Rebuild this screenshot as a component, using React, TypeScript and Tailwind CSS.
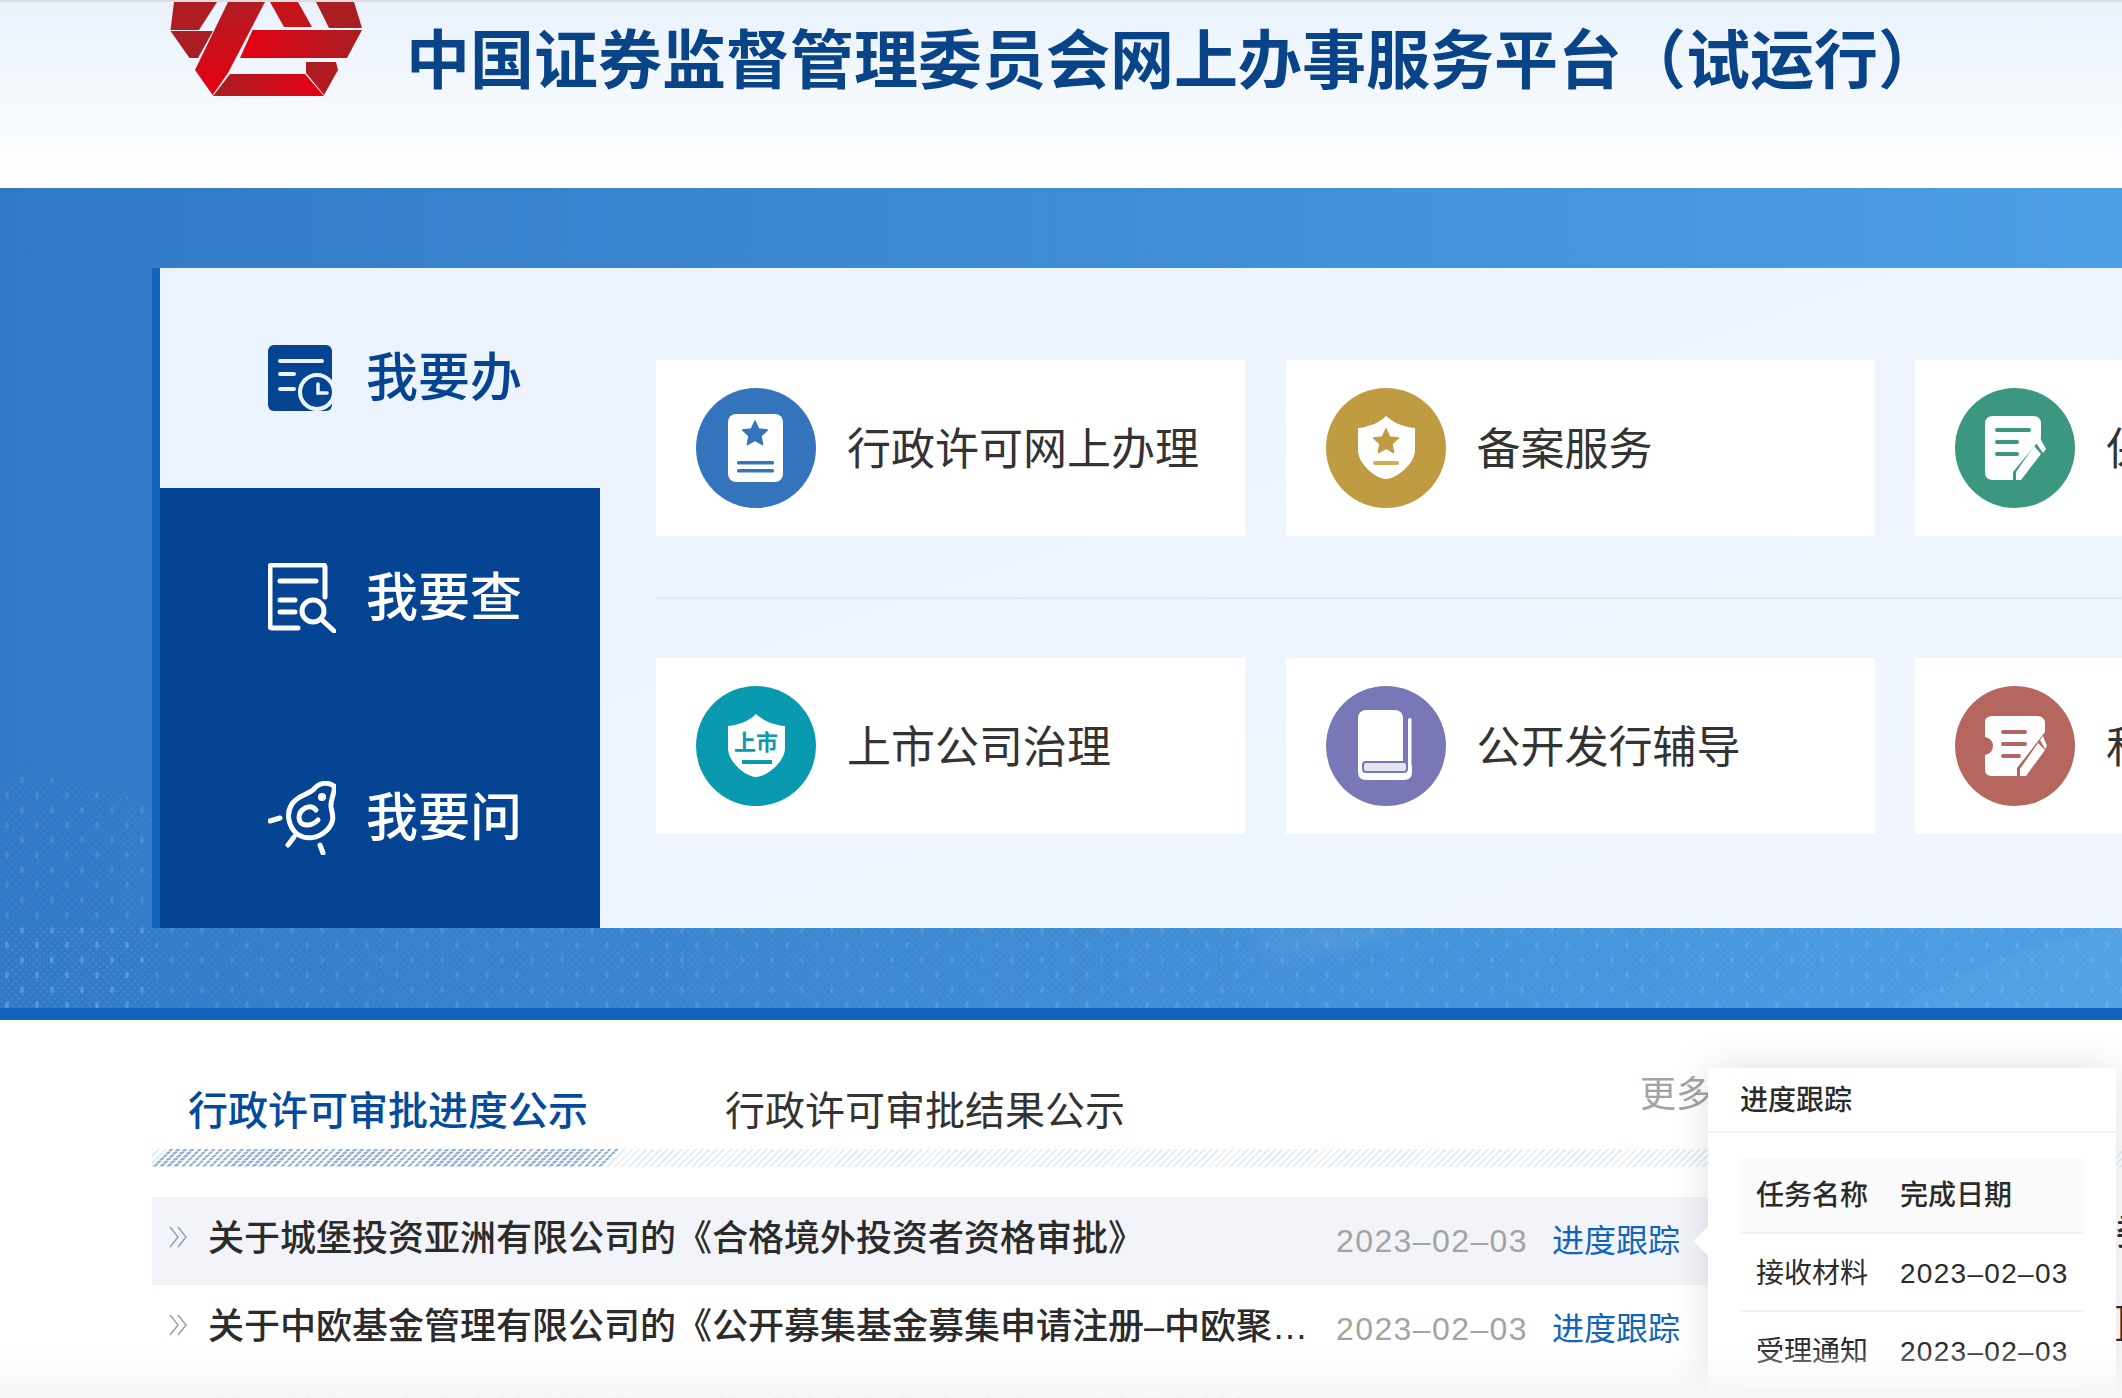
import React from "react";

const cjk = "font-['Liberation_Sans','Noto_Sans_CJK_SC',sans-serif]";

function Star({ cx, cy, r, fill }: { cx: number; cy: number; r: number; fill: string }) {
  const pts = Array.from({ length: 10 }, (_, i) => {
    const a = (Math.PI / 5) * i - Math.PI / 2;
    const d = i % 2 === 0 ? r : r * 0.48;
    return `${cx + d * Math.cos(a)},${cy + d * Math.sin(a)}`;
  }).join(" ");
  return <polygon points={pts} fill={fill} stroke={fill} strokeWidth="1.5" strokeLinejoin="round" />;
}

function Logo() {
  return (
    <svg className="absolute left-0 top-0" width="400" height="100" viewBox="0 0 400 100">
      <defs>
        <linearGradient id="lg1" x1="0" x2="1" y1="0" y2="0">
          <stop offset="0" stopColor="#e60012" />
          <stop offset="1" stopColor="#a81e22" />
        </linearGradient>
        <linearGradient id="lg2" x1="0" x2="1" y1="0" y2="0">
          <stop offset="0" stopColor="#a81e22" />
          <stop offset="1" stopColor="#e60012" />
        </linearGradient>
        <linearGradient id="lg3" x1="0" x2="0" y1="0" y2="1">
          <stop offset="0" stopColor="#b01c22" />
          <stop offset="1" stopColor="#e60012" />
        </linearGradient>
      </defs>
      <polygon points="174,2 170.5,30 199,30 217,2" fill="#b01c22" />
      <polygon points="170.5,31 189.5,58 198,58 213,31" fill="#a81e22" />
      <polygon points="228,2 265,2 228,73 212.6,95 195,70" fill="url(#lg3)" />
      <polygon points="230,74 305,74 324,96 213,96" fill="url(#lg2)" />
      <polygon points="252.6,30 362,30 347,58 240,58" fill="url(#lg1)" />
      <polygon points="270,2 298,2 312,27 284,27" fill="#c4151c" />
      <polygon points="316,2 354,2 362,28 329,28" fill="#a81e22" />
      <polygon points="306,62 336,62 338,70 324,95 306,73" fill="#ae1c22" />
    </svg>
  );
}

function NavTodo() {
  return (
    <svg width="68" height="66" viewBox="0 0 68 66">
      <rect x="0" y="0" width="64" height="66" rx="6" fill="#044493" />
      <g stroke="#ebf3fd" strokeWidth="4" strokeLinecap="round">
        <path d="M12 16H54M12 29H26M12 44H26" />
      </g>
      <circle cx="49" cy="47" r="17" fill="#044493" stroke="#ebf3fd" strokeWidth="4" />
      <path d="M50 39V48H59" fill="none" stroke="#ebf3fd" strokeWidth="3.5" strokeLinecap="round" />
    </svg>
  );
}

function NavSearch() {
  return (
    <svg width="68" height="70" viewBox="0 0 68 70" fill="none" stroke="#fff" strokeWidth="5" strokeLinecap="round">
      <path d="M30 65H4Q2 65 2 63V4Q2 2 4 2H55Q57 2 57 4V34" />
      <path d="M12 18H48M12 37H27M12 49H27" />
      <circle cx="45" cy="48" r="11" />
      <path d="M53 56L66 68" />
    </svg>
  );
}

function NavAsk() {
  return (
    <svg width="68" height="74" viewBox="0 0 68 74" fill="none" stroke="#fff" strokeWidth="5" strokeLinecap="round">
      <path d="M2 40L12 37M20 64L26 56M52 64L55 72" />
      <path d="M66 5C60 1 52 1 46 8C40 14 30 14 24 23C18 32 20 45 29 53C38 59 50 58 59 49C67 41 65 34 63 26C62 18 68 10 66 5Z" />
      <path d="M48 29C42 22 31 28 31 37C32 46 43 46 50 39" />
      <circle cx="54" cy="16" r="1.6" fill="#fff" />
    </svg>
  );
}

const shieldPath = "M60 28C54 34 44 39 32 40V62C32 76 50 91 60 91C70 91 89 76 89 62V40C76 39 67 34 60 28Z";

function CardIcon({ kind }: { kind: string }) {
  if (kind === "permit") {
    return (
      <svg width="120" height="120" viewBox="0 0 120 120">
        <circle cx="60" cy="60" r="60" fill="#3474bd" />
        <rect x="32" y="26" width="55" height="68" rx="8" fill="#fff" />
        <Star cx={59} cy={46} r={13} fill="#3474bd" />
        <rect x="41" y="73" width="37" height="3.5" rx="1.5" fill="#3474bd" />
        <rect x="41" y="81" width="37" height="3.5" rx="1.5" fill="#3474bd" />
      </svg>
    );
  }
  if (kind === "record") {
    return (
      <svg width="120" height="120" viewBox="0 0 120 120">
        <circle cx="60" cy="60" r="60" fill="#bf9c42" />
        <path d={shieldPath} fill="#fff" />
        <Star cx={60} cy={54} r={13} fill="#bf9c42" />
        <rect x="47" y="73" width="26" height="4" rx="2" fill="#d0ad52" />
      </svg>
    );
  }
  if (kind === "listed") {
    return (
      <svg width="120" height="120" viewBox="0 0 120 120">
        <circle cx="60" cy="60" r="60" fill="#0a9ab0" />
        <path d={shieldPath} fill="#fff" />
        <text x="60" y="64" textAnchor="middle" fontSize="22" fontWeight="700" fill="#0a9ab0" fontFamily="'Noto Sans CJK SC',sans-serif">上市</text>
        <rect x="46" y="74" width="30" height="4" fill="#0a9ab0" />
      </svg>
    );
  }
  if (kind === "book") {
    return (
      <svg width="120" height="120" viewBox="0 0 120 120">
        <circle cx="60" cy="60" r="60" fill="#7a77b6" />
        <rect x="32" y="24" width="45" height="68" rx="8" fill="#fff" />
        <path d="M32 80H86V86Q86 94 78 94H40Q32 94 32 86Z" fill="#fff" />
        <rect x="82" y="32" width="3.5" height="54" rx="1.5" fill="#fff" />
        <rect x="37" y="76" width="44" height="10" rx="3" fill="#e6e5f3" stroke="#7a77b6" strokeWidth="2" />
      </svg>
    );
  }
  if (kind === "pen") {
    return (
      <svg width="120" height="120" viewBox="0 0 120 120">
        <circle cx="60" cy="60" r="60" fill="#3b977f" />
        <path d="M38 28H78Q86 28 86 36V50L58 84V92H38Q30 92 30 84V36Q30 28 38 28Z" fill="#fff" />
        <path d="M61 92H66L86 66L79 58L61 84Z" fill="#fff" />
        <path d="M81 55L85 50L91 61L88 65Z" fill="#fff" />
        <path d="M42 42H74M42 54H62M42 66H62" stroke="#3b977f" strokeWidth="4" strokeLinecap="round" />
      </svg>
    );
  }
  return (
    <svg width="120" height="120" viewBox="0 0 120 120">
      <circle cx="60" cy="60" r="60" fill="#b5665f" />
      <path d="M38 30H82Q90 30 90 38V46L62 82V90H38Q30 90 30 84V69Q38 67 38 60Q38 53 30 51V36Q30 30 38 30Z" fill="#fff" />
      <path d="M65 90H71L90 64L83 57L65 83Z" fill="#fff" />
      <path d="M85 54L88 50L92 60L90 63Z" fill="#fff" />
      <path d="M48 46H70M48 58H70M48 70H64" stroke="#b5665f" strokeWidth="4" strokeLinecap="round" />
    </svg>
  );
}

function ServiceCard({ kind, label }: { kind: string; label: string }) {
  return (
    <div className="w-[589px] h-[176px] bg-white flex items-center pl-[40px] gap-[31px] shrink-0">
      <CardIcon kind={kind} />
      <span className="text-[44px] leading-none text-[#333] whitespace-nowrap mt-[3px]">{label}</span>
    </div>
  );
}

function BandDots() {
  return (
    <svg className="absolute left-0 top-0" width="2122" height="820" viewBox="0 0 2122 820">
      <defs>
        <pattern id="dots" width="30" height="30" patternUnits="userSpaceOnUse">
          <ellipse cx="7" cy="7" rx="1.8" ry="3.5" fill="#fff" fillOpacity="0.1" />
          <ellipse cx="22" cy="22" rx="1.8" ry="3.5" fill="#fff" fillOpacity="0.1" />
        </pattern>
        <pattern id="fine" width="7" height="7" patternUnits="userSpaceOnUse">
          <circle cx="2" cy="2" r="1" fill="#fff" fillOpacity="0.06" />
          <circle cx="5.5" cy="5.5" r="1" fill="#fff" fillOpacity="0.05" />
        </pattern>
        <linearGradient id="ridge" x1="0" x2="1" y1="1" y2="0">
          <stop offset="0" stopColor="#fff" stopOpacity="0" />
          <stop offset="1" stopColor="#fff" stopOpacity="0.1" />
        </linearGradient>
      </defs>
      <path d="M0 587C60 587 120 600 152 622V820H0Z" fill="url(#dots)" />
      <path d="M0 587C60 587 120 600 152 622V820H0Z" fill="url(#fine)" />
      <rect x="0" y="740" width="2122" height="80" fill="url(#dots)" />
      <rect x="0" y="740" width="2122" height="80" fill="url(#fine)" />
      <path className="blur-[6px]" d="M1270 790C1310 775 1360 755 1410 740H1260C1250 760 1260 775 1270 790Z" fill="url(#ridge)" />
      <path d="M1900 820C1940 790 2040 750 2122 740V820Z" fill="#fff" fillOpacity="0.03" />
    </svg>
  );
}

function Chevrons() {
  return (
    <svg width="20" height="24" viewBox="0 0 20 24" fill="none" stroke="#9aa3b5" strokeWidth="1.6">
      <path d="M2 2L10 12L2 22M10 2L18 12L10 22" />
    </svg>
  );
}

function NewsRow({ title, active }: { title: string; active?: boolean }) {
  return (
    <div className={`h-[88px] flex items-center pl-[16px] ${active ? "bg-[#f2f4f9]" : ""}`}>
      <span className="w-[40px] shrink-0 -mt-[8px]">
        <Chevrons />
      </span>
      <span className="w-[1107px] shrink-0 truncate text-[36px] leading-[48px] font-medium text-[#2b2b2b] -mt-[5px]">{title}</span>
      <span className="ml-[21px] w-[216px] shrink-0 text-[32px] leading-none text-[#a3a3a3] tracking-[1.4px] whitespace-nowrap">2023–02–03</span>
      <span className="text-[32px] leading-none text-[#1164bd] whitespace-nowrap">进度跟踪</span>
    </div>
  );
}

function ProgressRow({ name, date, head }: { name: string; date: string; head?: boolean }) {
  return (
    <div className={`flex items-center border-b-2 border-[#f0f0f0] text-[28px] leading-none text-[#2b2b2b] ${head ? "h-[76px] bg-[#fafafa] rounded-t-[4px] font-medium" : "h-[78px] pt-[1px]"}`}>
      <span className="w-[160px] pl-[16px] shrink-0 pt-[2px]">{name}</span>
      <span className={`pt-[2px] ${head ? "" : "tracking-[1.3px]"}`}>{date}</span>
    </div>
  );
}

export default function App() {
  return (
    <div className={`relative w-[2122px] h-[1398px] overflow-hidden bg-white ${cjk}`}>
      <header className="relative h-[188px] border-t-2 border-[#dedede] bg-gradient-to-b from-[#e9f2fc] to-white">
        <div className="absolute left-0 -top-[2px] w-[400px] h-[100px]">
          <Logo />
        </div>
        <h1 className="absolute left-[406px] top-[27px] text-[64px] leading-none font-bold text-[#0a4488] whitespace-nowrap">
          中国证券监督管理委员会网上办事服务平台（试运行）
        </h1>
      </header>

      <section className="relative h-[832px] border-b-[12px] border-[#1164bd] bg-gradient-to-r from-[#3179c7] to-[#4d9fe4] pt-[80px]">
        <BandDots />
        <div className="relative ml-[152px] h-[660px] flex border-l-[8px] border-[#1164bd] bg-gradient-to-br from-[#ebf3fd] to-[#f1f6fd]">
          <nav className="w-[440px] shrink-0 flex flex-col">
            <div className="h-[220px] flex items-center pl-[108px] gap-[30px] text-[#044493]">
              <NavTodo />
              <span className="text-[52px] leading-none font-medium">我要办</span>
            </div>
            <div className="h-[220px] flex items-center pl-[108px] gap-[30px] bg-[#044493] text-white">
              <NavSearch />
              <span className="text-[52px] leading-none font-medium">我要查</span>
            </div>
            <div className="h-[220px] flex items-center pl-[108px] gap-[30px] bg-[#044493] text-white">
              <NavAsk />
              <span className="text-[52px] leading-none font-medium">我要问</span>
            </div>
          </nav>
          <div className="flex-1 min-w-0 pl-[56px] pt-[92px]">
            <div className="flex gap-[40.5px]">
              <ServiceCard kind="permit" label="行政许可网上办理" />
              <ServiceCard kind="record" label="备案服务" />
              <ServiceCard kind="pen" label="保荐业务" />
            </div>
            <div className="h-[2px] bg-[#dfe8f5] mt-[61px] mb-[59px]" />
            <div className="flex gap-[40.5px]">
              <ServiceCard kind="listed" label="上市公司治理" />
              <ServiceCard kind="book" label="公开发行辅导" />
              <ServiceCard kind="note" label="私募基金" />
            </div>
          </div>
        </div>
      </section>

      <section className="flex pl-[152px]">
        <div className="w-[1560px] shrink-0">
          <div className="h-[129px] flex items-center justify-between pt-[53px]">
            <div className="flex pl-[36px] gap-[137px] text-[40px] leading-none">
              <span className="text-[#044a9d] font-medium">行政许可审批进度公示</span>
              <span className="text-[#333]">行政许可审批结果公示</span>
            </div>
            <span className="text-[36px] leading-none text-[#a3a3a3] -mt-[33px]">更多</span>
          </div>
          <div className="relative h-[18px] w-[1970px] bg-[repeating-linear-gradient(-45deg,#1164bd1c_0_2px,transparent_2px_5px)]">
            <div className="absolute left-0 top-0 h-full w-[470px] bg-[repeating-linear-gradient(0deg,#ffffff80_0_1px,transparent_1px_3px),repeating-linear-gradient(-45deg,#0a4f9c66_0_2.5px,transparent_2.5px_5px)] [clip-path:polygon(18px_0,100%_0,calc(100%-18px)_100%,0_100%)]" />
          </div>
          <div className="mt-[30px]">
            <NewsRow active title="关于城堡投资亚洲有限公司的《合格境外投资者资格审批》" />
            <NewsRow title="关于中欧基金管理有限公司的《公开募集基金募集申请注册–中欧聚利混合型证券投资基金》" />
            <NewsRow title="关于财通证券资产管理有限公司的《基金募集申请注册–财通资管》" />
          </div>
        </div>
        <div className="ml-[404px] pt-[177px] text-[36px] leading-[48px] font-medium text-[#2b2b2b]">
          <div className="h-[88px] flex items-center whitespace-nowrap -mt-[8px]">委托</div>
          <div className="h-[88px] flex items-center whitespace-nowrap">]</div>
        </div>
      </section>

      <div className="absolute left-[1708px] top-[1068px] w-[408px] h-[340px] rounded-[4px] bg-white shadow-[0_0_40px_rgba(0,0,0,0.12)]">
        <div className="absolute -left-[10px] top-[162px] w-[22px] h-[22px] rotate-45 bg-white" />
        <div className="relative h-[65px] flex items-center pl-[32px] pt-[3px] border-b-2 border-[#f0f0f0] text-[28px] leading-none font-medium text-[#2b2b2b] bg-white rounded-t-[4px]">
          进度跟踪
        </div>
        <div className="relative mx-[32px] mt-[25px]">
          <ProgressRow head name="任务名称" date="完成日期" />
          <ProgressRow name="接收材料" date="2023–02–03" />
          <ProgressRow name="受理通知" date="2023–02–03" />
        </div>
      </div>

      <div className="absolute left-0 right-0 bottom-0 h-[50px] bg-gradient-to-t from-[#f6f6f6] to-transparent" />
    </div>
  );
}
